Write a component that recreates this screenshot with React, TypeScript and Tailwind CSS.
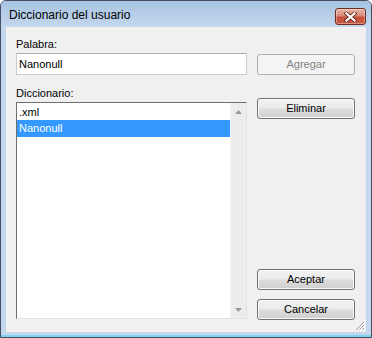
import React from "react";

const ui = "font-['Liberation_Sans',Arial,sans-serif] text-[11px] leading-[13px] text-black";

const btnBase =
  "h-[21px] w-[98px] flex items-center justify-center rounded-[3px] border text-[11px] leading-[13px]";
const btnOn =
  "border-[#707070] bg-[linear-gradient(#f2f2f2_0%,#ebebeb_48%,#dddddd_52%,#cfcfcf_100%)] shadow-[inset_0_0_0_1px_#fbfbfb] text-black";
const btnOff = "border-[#adb2b5] bg-[#f4f4f4] text-[#838383]";

function Button({ label, disabled, className = "" }: { label: string; disabled?: boolean; className?: string }) {
  return <div className={`${btnBase} ${disabled ? btnOff : btnOn} ${className}`}>{label}</div>;
}

function CloseButton() {
  return (
    <div className="w-[31px] h-[17px] rounded-[3px] border border-[#6e2a1f] bg-[linear-gradient(#e9b3a6_0%,#d98a76_45%,#c8503a_55%,#c4593f_100%)] shadow-[inset_0_0_0_1px_rgba(255,255,255,0.35)] flex items-center justify-center">
      <svg width="13" height="10" viewBox="0 0 13 10">
        <path d="M2.5 1.5 L10.5 8.5 M10.5 1.5 L2.5 8.5" stroke="#6b2a20" strokeWidth="4" strokeLinecap="square" />
        <path d="M2.5 1.5 L10.5 8.5 M10.5 1.5 L2.5 8.5" stroke="#ffffff" strokeWidth="2.2" strokeLinecap="square" />
      </svg>
    </div>
  );
}

function Arrow({ up }: { up?: boolean }) {
  return (
    <svg width="7" height="4" viewBox="0 0 7 4">
      <path d={up ? "M0 4 L3.5 0 L7 4 Z" : "M0 0 L3.5 4 L7 0 Z"} fill="#9a9a9a" />
    </svg>
  );
}

export default function App() {
  return (
    <div className={`w-[372px] h-[338px] flex flex-col rounded-t-[6px] border border-[#434f60] bg-[#c3d8ee] ${ui}`}>
      {/* Title bar */}
      <div className="h-[26px] flex items-start justify-between rounded-t-[5px] bg-linear-to-b from-[#a7c3e2] to-[#c4d8ee] pl-[8px] pr-[5px]">
        <span className="mt-[6px] text-[12px] leading-[16px] text-black">Diccionario del usuario</span>
        <div className="mt-[7px]">
          <CloseButton />
        </div>
      </div>

      {/* Client area */}
      <div className="relative mx-[5px] h-[305px] bg-[#f0f0f0] flex gap-[10px] pl-[10px]">
        <div className="w-[231px] flex flex-col">
          <label className="mt-[11px] h-[13px] mb-[2px]">Palabra:</label>
          <div className="h-[22px] border border-[#c9cdd2] border-t-[#abadb3] bg-white flex items-center pl-[2px]">
            Nanonull
          </div>
          <label className="mt-[12px] h-[13px] mb-[2px]">Diccionario:</label>
          <div className="h-[217px] flex border border-t-[#6f6f6f] border-l-[#6f6f6f] border-r-[#e3e3e3] border-b-[#e3e3e3] bg-white">
            <div className="flex-1 flex flex-col pt-[1px]">
              <div className="h-[16px] leading-[16px] pl-[2px]">.xml</div>
              <div className="h-[17px] leading-[17px] pl-[2px] bg-[#3399ff] text-white">Nanonull</div>
            </div>
            <div className="w-[16px] flex flex-col justify-between bg-[#ececec] border-l border-[#f6f6f6]">
              <div className="h-[17px] flex items-center justify-center">
                <Arrow up />
              </div>
              <div className="h-[17px] flex items-center justify-center">
                <Arrow />
              </div>
            </div>
          </div>
        </div>

        <div className="w-[98px] flex flex-col">
          <Button label="Agregar" disabled className="mt-[27px]" />
          <Button label="Eliminar" className="mt-[23px]" />
          <Button label="Aceptar" className="mt-[150px]" />
          <Button label="Cancelar" className="mt-[9px]" />
        </div>

        {/* size grip */}
        <svg className="absolute right-[1px] bottom-[1px]" width="11" height="11" viewBox="0 0 11 11">
          <path d="M10 2 L2 10 M10 5 L5 10 M10 8 L8 10" stroke="#a3a3a3" strokeWidth="1" />
          <path d="M11 3 L3 11 M11 6 L6 11 M11 9 L9 11" stroke="#ffffff" strokeWidth="1" />
        </svg>
      </div>

      {/* bottom frame */}
      <div className="flex-1 flex flex-col justify-end">
        <div className="h-[2px] bg-[#7fd3ee]" />
      </div>
    </div>
  );
}
